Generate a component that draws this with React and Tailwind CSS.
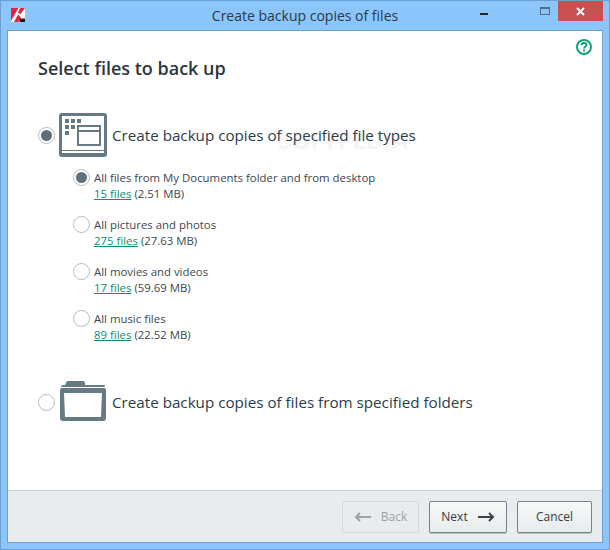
import React from "react";

const font = { fontFamily: '"Open Sans", "Noto Sans", sans-serif' };

function Radio({ checked }) {
  return (
    <span className="relative shrink-0 w-[17px] h-[17px] rounded-full border border-[#b4bcbf] bg-white flex items-center justify-center">
      {checked && <span className="w-[11px] h-[11px] rounded-full bg-[#5f707c]" />}
    </span>
  );
}

function TypesIcon() {
  return (
    <svg width="48" height="44" viewBox="0 0 48 44" className="shrink-0">
      <rect width="48" height="44" rx="3" fill="#667a85" />
      <rect x="3" y="3" width="42" height="34" fill="#fff" />
      <rect x="3" y="38" width="42" height="2" fill="#fff" />
      <g fill="#667a85">
        <rect x="6" y="6" width="4" height="4" /><rect x="12" y="6" width="4" height="4" /><rect x="18" y="6" width="4" height="4" />
        <rect x="6" y="12" width="4" height="4" /><rect x="12" y="12" width="4" height="4" />
        <rect x="6" y="18" width="4" height="4" />
      </g>
      <path d="M19 13h22v19H19z" fill="none" stroke="#667a85" strokeWidth="2" />
      <rect x="19" y="17" width="22" height="2" fill="#667a85" />
    </svg>
  );
}

function FolderIcon() {
  return (
    <svg width="48" height="44" viewBox="0 0 48 44" className="shrink-0">
      <path d="M6 5 L7.500 2 Q8 1 9 1 H24 Q26 1 26 3 V5 H45 Q46 5 46 7 H2 Q2 5 4 5Z" fill="#667a85" />
      <path d="M3 8 H45 Q47 8 47 10 V38 Q47 41 44 41 H4 Q1 41 1 38 V10 Q1 8 3 8Z" fill="#667a85" />
      <path d="M5 13 H43 L42 37 H6 Z" fill="#fff" />
    </svg>
  );
}

function SubOption({ checked, title, link, size }) {
  return (
    <div className="flex gap-[4px] h-[47px]">
      <div><Radio checked={checked} /></div>
      <div className="text-[11.4px] leading-[16px] text-[#3c4750] pt-[1px]">
        <div>{title}</div>
        <div>
          <span className="text-[#0f8b74] underline">{link}</span> <span>{size}</span>
        </div>
      </div>
    </div>
  );
}

function Button({ children, disabled, className }) {
  return (
    <button
      className={`h-[32px] rounded-[2px] border text-[12px] flex items-center justify-center ${
        disabled
          ? "border-[#d3dadd] text-[#9aa3a8] bg-[#e8ecef]"
          : "border-[#77838a] text-[#333c42] bg-gradient-to-b from-[#f8f9f9] to-[#e6ebeb] shadow-[0_1px_0_#b9c2c7]"
      } ${className}`}
    >
      {children}
    </button>
  );
}

export default function App() {
  return (
    <div style={font} className="w-[610px] h-[550px] bg-[#8ac5fb] border border-[#6f9fcf] flex flex-col overflow-hidden">
      <div className="relative h-[29px] shrink-0 flex items-center justify-center text-[14px] text-[#2c3a46]">
        <svg width="14" height="14" viewBox="0 0 14 14" className="absolute left-[10px] top-[7px]">
          <path d="M0 0H14V14H0Z" fill="#fff" />
          <path d="M0 0H7.500L0 13Z" fill="#e5243b" />
          <path d="M9 0H14L9.500 6L7 5Z" fill="#e5243b" />
          <path d="M3 14L7 6.500L10 9.500L7.500 14Z" fill="#e5243b" />
          <path d="M8.500 10.500H14V14H8.500Z" fill="#1a1a1a" />
        </svg>
        <span>Create backup copies of files</span>
        <div className="absolute top-[12px] right-[121px] w-[8px] h-[2px] bg-[#222]" />
        <div className="absolute top-[6px] right-[59px] w-[10px] h-[8px] border border-[#4f6d88] border-t-2" />
        <div className="absolute top-0 right-[6px] w-[45px] h-[20px] bg-[#c75050] flex items-center justify-center">
          <svg width="9" height="9" viewBox="0 0 9 9"><path d="M1 1l7 7M8 1L1 8" stroke="#fff" strokeWidth="2" /></svg>
        </div>
      </div>

      <div className="relative ml-[6px] mr-[6px] mb-[6px] flex-1 border border-[#6f9fcf] bg-white flex flex-col min-h-0">
        <div className="flex-1 relative pl-[30px] pt-[23px]">
          <div className="absolute right-[10px] top-[8px]">
            <svg width="16" height="16" viewBox="0 0 16 16">
              <circle cx="8" cy="8" r="7" fill="none" stroke="#0fa27d" strokeWidth="2" />
              <path d="M5.500 6.200C5.500 4.800 6.600 4 8 4s2.500.8 2.500 2.100c0 1.800-2.500 1.700-2.500 3.400" fill="none" stroke="#0fa27d" strokeWidth="1.800" />
              <rect x="7" y="10.500" width="2" height="2" fill="#0fa27d" />
            </svg>
          </div>
          <div className="absolute left-[270px] top-[95px] text-[24px] leading-[28px] font-bold text-[#f4f5f5] pointer-events-none select-none">
            SOFTPEDIA<span className="text-[10px] align-top">®</span>
          </div>

          <h1 className="relative text-[18px] leading-[28px] font-semibold text-[#2c3640]">Select files to back up</h1>

          <div className="relative flex items-center gap-[4px] mt-[31px] h-[44px]">
            <Radio checked />
            <TypesIcon />
            <span className="text-[15.2px] text-[#2b3c4c] ml-[1px]">Create backup copies of specified file types</span>
          </div>

          <div className="relative ml-[35px] mt-[12px]">
            <SubOption checked title="All files from My Documents folder and from desktop" link="15 files" size="(2.51 MB)" />
            <SubOption title="All pictures and photos" link="275 files" size="(27.63 MB)" />
            <SubOption title="All movies and videos" link="17 files" size="(59.69 MB)" />
            <SubOption title="All music files" link="89 files" size="(22.52 MB)" />
          </div>

          <div className="relative flex items-center gap-[4px] mt-[23px] h-[44px]">
            <Radio />
            <FolderIcon />
            <span className="text-[15.2px] text-[#2b3c4c] ml-[1px]">Create backup copies of files from specified folders</span>
          </div>
        </div>

        <div className="h-[52px] shrink-0 bg-[#e8ecef] border-t border-[#c9d3da] flex items-center justify-end gap-[10px] pr-[10px] pt-[1px]">
          <Button disabled className="w-[77px] gap-[9px]">
            <svg width="18" height="10" viewBox="0 0 18 10"><path d="M17 5H2M6 1L2 5l4 4" fill="none" stroke="#9aa3a8" strokeWidth="2" /></svg>
            Back
          </Button>
          <Button className="w-[78px] gap-[9px]">
            Next
            <svg width="18" height="10" viewBox="0 0 18 10"><path d="M1 5h15M12 1l4 4-4 4" fill="none" stroke="#3c4246" strokeWidth="2" /></svg>
          </Button>
          <Button className="w-[75px]">Cancel</Button>
        </div>
      </div>
    </div>
  );
}
